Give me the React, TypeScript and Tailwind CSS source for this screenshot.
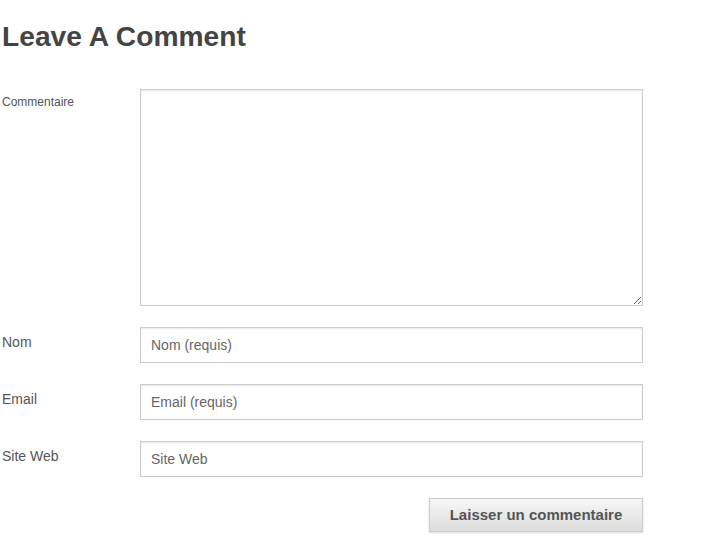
export default function App() {
  const fields = [
    { label: "Nom", placeholder: "Nom (requis)" },
    { label: "Email", placeholder: "Email (requis)" },
    { label: "Site Web", placeholder: "Site Web" },
  ];

  return (
    <div className="w-[704px] h-[546px] bg-white pl-[2px] font-['Liberation_Sans',Arial,sans-serif] text-[#555]">
      <h1 className="pt-[19px] text-[28.2px] leading-[34px] font-bold text-[#444]">Leave A Comment</h1>

      <form className="mt-[36px] w-[641px]">
        <div className="flex">
          <label className="w-[138px] pt-[6px] text-[12px] leading-[14px]">Commentaire</label>
          <textarea className="w-[503px] h-[217px] border border-[#ccc] shadow-[inset_0_1px_2px_rgba(0,0,0,0.1)] outline-none resize" />
        </div>

        {fields.map((f) => (
          <div key={f.label} className="flex items-start mt-[21px]">
            <label className="w-[138px] pt-[7px] text-[14px] leading-[16px]">{f.label}</label>
            <input
              placeholder={f.placeholder}
              className="w-[503px] h-[36px] border border-[#ccc] shadow-[inset_0_1px_2px_rgba(0,0,0,0.1)] px-[10px] text-[14px] text-[#555] placeholder:text-[#666] outline-none"
            />
          </div>
        ))}

        <div className="flex justify-end mt-[21px]">
          <button
            type="button"
            className="w-[214px] h-[34px] border border-[#ccc] bg-gradient-to-b from-[#f7f7f7] to-[#dcdcdc] shadow-[0_1px_2px_rgba(0,0,0,0.15)] text-[15px] font-bold text-[#555]"
          >
            Laisser un commentaire
          </button>
        </div>
      </form>
    </div>
  );
}
